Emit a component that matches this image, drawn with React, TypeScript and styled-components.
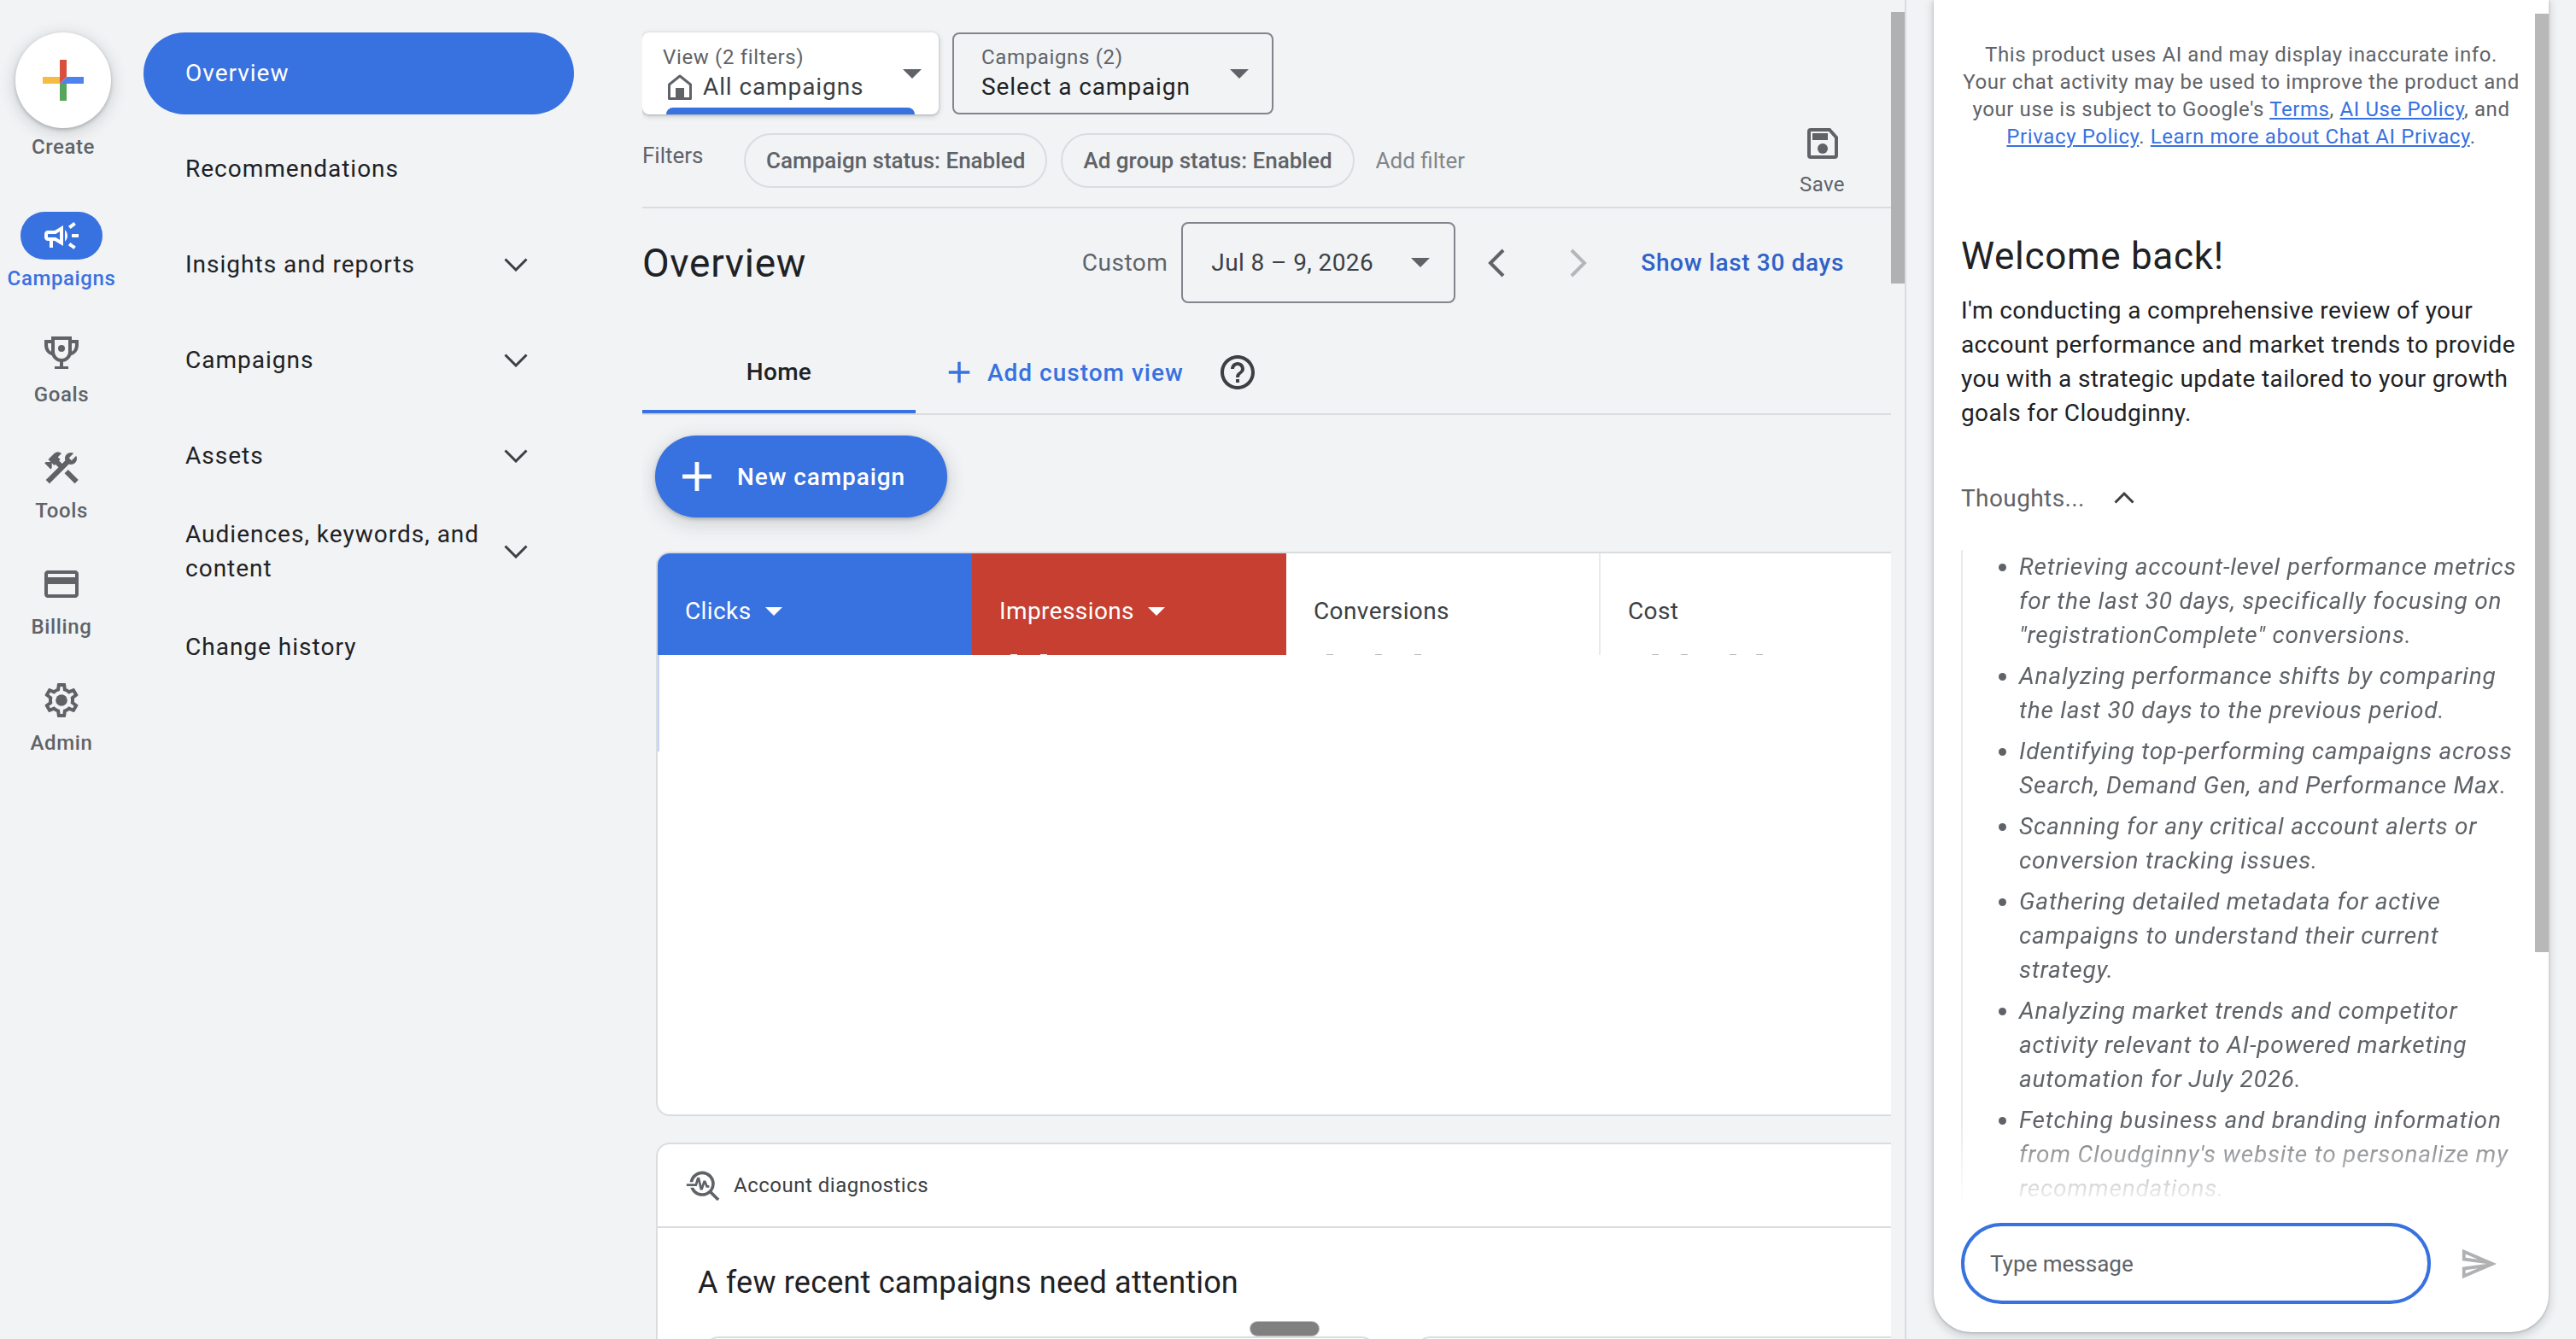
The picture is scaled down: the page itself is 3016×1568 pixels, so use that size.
import React from "react";
import styled, { createGlobalStyle } from "styled-components";
import {
  MdAdd,
  MdConstruction,
  MdOutlineCampaign,
  MdOutlineCreditCard,
  MdOutlineHelpOutline,
  MdOutlineSend,
  MdTroubleshoot,
} from "react-icons/md";

const GlobalStyle = createGlobalStyle`
  html, body {
    margin: 0;
    padding: 0;
    background: #f1f3f5;
  }
  body {
    font-family: Roboto, "Liberation Sans", sans-serif;
    color: #202124;
  }
  * {
    box-sizing: border-box;
  }
`;

const navItems = [
  { label: "Overview", active: true },
  { label: "Recommendations" },
  { label: "Insights and reports", expandable: true },
  { label: "Campaigns", expandable: true },
  { label: "Assets", expandable: true },
  { label: "Audiences, keywords, and content", expandable: true },
  { label: "Change history" },
];

const thoughts = [
  'Retrieving account-level performance metrics for the last 30 days, specifically focusing on "registrationComplete" conversions.',
  "Analyzing performance shifts by comparing the last 30 days to the previous period.",
  "Identifying top-performing campaigns across Search, Demand Gen, and Performance Max.",
  "Scanning for any critical account alerts or conversion tracking issues.",
  "Gathering detailed metadata for active campaigns to understand their current strategy.",
  "Analyzing market trends and competitor activity relevant to AI-powered marketing automation for July 2026.",
  "Fetching business and branding information from Cloudginny's website to personalize my recommendations.",
];

// tops of the clipped chart labels that peek out under the metric tiles
const clippedTicks = {
  impressions: [45, 80],
  conversions: [47, 104, 150],
  cost: [60, 94, 151, 182],
};

const GooglePlus = () => (
  <svg width="48" height="48" viewBox="0 0 48 48">
    <path fill="#f4bc41" d="M0 20h20v8H0z" />
    <path fill="#d94f3d" d="M20 0h8v20l-8 8z" />
    <path fill="#4f82ec" d="M28 20h20v8H20z" />
    <path fill="#58a65c" d="M20 28h8v20h-8z" />
  </svg>
);

const Trophy = () => (
  <svg width="40" height="40" viewBox="0 -2 40 40" fill="none" stroke="currentColor" strokeWidth="4">
    <path d="M10 2h20v16a10 10 0 0 1-20 0z" />
    <path d="M10 6H2v4c0 6 4 10 9 11M30 6h8v4c0 6-4 10-9 11" />
    <path d="M20 28v9M12 37h16" />
    <circle cx="20" cy="14" r="4" fill="currentColor" stroke="none" />
  </svg>
);

const Gear = () => (
  <svg width="48" height="48" viewBox="0 0 24 24" fill="currentColor">
    <path d="M19.43 12.98c.04-.32.07-.64.07-.98 0-.34-.03-.66-.07-.98l2.11-1.65c.19-.15.24-.42.12-.64l-2-3.46c-.09-.16-.26-.25-.44-.25-.06 0-.12.01-.17.03l-2.49 1c-.52-.4-1.08-.73-1.69-.98l-.38-2.65C14.46 2.18 14.25 2 14 2h-4c-.25 0-.46.18-.49.42l-.38 2.65c-.61.25-1.17.59-1.69.98l-2.49-1c-.06-.02-.12-.03-.18-.03-.17 0-.34.09-.43.25l-2 3.46c-.13.22-.07.49.12.64l2.11 1.65c-.04.32-.07.65-.07.98 0 .33.03.66.07.98l-2.11 1.65c-.19.15-.24.42-.12.64l2 3.46c.09.16.26.25.44.25.06 0 .12-.01.17-.03l2.49-1c.52.4 1.08.73 1.69.98l.38 2.65c.03.24.24.42.49.42h4c.25 0 .46-.18.49-.42l.38-2.65c.61-.25 1.17-.59 1.69-.98l2.49 1c.06.02.12.03.18.03.17 0 .34-.09.43-.25l2-3.46c.12-.22.07-.49-.12-.64l-2.11-1.65zm-1.98-1.71c.04.31.05.52.05.73 0 .21-.02.43-.05.73l-.14 1.13.89.7 1.08.84-.7 1.21-1.27-.51-1.04-.42-.9.68c-.43.32-.84.56-1.25.73l-1.06.43-.16 1.13-.2 1.35h-1.4l-.19-1.35-.16-1.13-1.06-.43c-.43-.18-.83-.41-1.23-.71l-.91-.7-1.06.43-1.27.51-.7-1.21 1.08-.84.89-.7-.14-1.13c-.03-.31-.05-.54-.05-.74s.02-.43.05-.73l.14-1.13-.89-.7-1.08-.84.7-1.21 1.27.51 1.04.42.9-.68c.43-.32.84-.56 1.25-.73l1.06-.43.16-1.13.2-1.35h1.39l.19 1.35.16 1.13 1.06.43c.43.18.83.41 1.23.71l.91.7 1.06-.43 1.27-.51.7 1.21-1.07.85-.89.7.14 1.13z" />
    <circle cx="12" cy="12" r="3.4" />
  </svg>
);

const HomeIcon = () => (
  <svg width="28" height="30" viewBox="0 0 28 30" fill="none" stroke="#5f6368" strokeWidth="3" strokeLinejoin="round">
    <path d="M14 2 1.500 12v16.500h25V12z" />
    <path d="M9 28V16h10v12z" fill="#5f6368" stroke="none" />
  </svg>
);

const SaveIcon = () => (
  <svg width="36" height="36" viewBox="0 0 36 36">
    <path
      fill="none"
      stroke="#5f6368"
      strokeWidth="4"
      d="M2 4a2 2 0 0 1 2-2h22l8 9v21a2 2 0 0 1-2 2H4a2 2 0 0 1-2-2z"
    />
    <path fill="#5f6368" d="M6 10V6h18v8H6z" />
    <circle cx="18" cy="24" r="6" fill="#5f6368" />
  </svg>
);

const ChevronDown = () => (
  <svg width="28" height="16" viewBox="0 0 28 16" fill="none" stroke="#3c4043" strokeWidth="3">
    <path d="M1.500 1.500 14 14 26.500 1.500" />
  </svg>
);

const ChevronUp = () => (
  <svg width="24" height="14" viewBox="0 0 24 14" fill="none" stroke="#3c4043" strokeWidth="3">
    <path d="M1.500 12.500 12 2 22.500 12.500" />
  </svg>
);

const ChevronSide = ({ dir, color }: { dir: "left" | "right"; color: string }) => (
  <svg width="20" height="34" viewBox="0 0 20 34" fill="none" stroke={color} strokeWidth="4">
    <path d={dir === "left" ? "M18 2 3 17l15 15" : "M2 2l15 15L2 32"} />
  </svg>
);

const Ticks = ({ offsets, light }: { offsets: number[]; light?: boolean }) => (
  <>
    {offsets.map((x) => (
      <Tick key={x} light={light} style={{ left: x }} />
    ))}
  </>
);

export default function App() {
  return (
    <Page>
      <GlobalStyle />
      <Rail>
        <CreateButton>
          <GooglePlus />
        </CreateButton>
        <CreateLabel>Create</CreateLabel>
        <RailList>
          <RailItem>
            <RailPill>
              <MdOutlineCampaign size={48} color="#fff" />
            </RailPill>
            <RailLabel active>Campaigns</RailLabel>
          </RailItem>
          <RailItem>
            <RailIcon>
              <Trophy />
            </RailIcon>
            <RailLabel>Goals</RailLabel>
          </RailItem>
          <RailItem>
            <RailIcon>
              <MdConstruction size={48} />
            </RailIcon>
            <RailLabel>Tools</RailLabel>
          </RailItem>
          <RailItem>
            <RailIcon>
              <MdOutlineCreditCard size={48} />
            </RailIcon>
            <RailLabel>Billing</RailLabel>
          </RailItem>
          <RailItem>
            <RailIcon>
              <Gear />
            </RailIcon>
            <RailLabel>Admin</RailLabel>
          </RailItem>
        </RailList>
      </Rail>

      <Nav>
        {navItems.map((item) => (
          <NavItem key={item.label} active={item.active}>
            <NavText>{item.label}</NavText>
            {item.expandable && <ChevronDown />}
          </NavItem>
        ))}
      </Nav>

      <Main>
        <SelectorRow>
          <ViewSelector>
            <div>
              <SelectorLabel>View (2 filters)</SelectorLabel>
              <SelectorValue>
                <HomeIcon />
                All campaigns
              </SelectorValue>
            </div>
            <Caret />
            <ViewAccent />
          </ViewSelector>
          <CampaignSelector>
            <div>
              <SelectorLabel>Campaigns (2)</SelectorLabel>
              <SelectorValue dark>Select a campaign</SelectorValue>
            </div>
            <Caret />
          </CampaignSelector>
        </SelectorRow>

        <FilterBar>
          <FilterLabel>Filters</FilterLabel>
          <Chip>Campaign status: Enabled</Chip>
          <Chip>Ad group status: Enabled</Chip>
          <AddFilter>Add filter</AddFilter>
          <SaveAction>
            <SaveIcon />
            <span>Save</span>
          </SaveAction>
        </FilterBar>

        <TitleRow>
          <PageTitle>Overview</PageTitle>
          <CustomLabel>Custom</CustomLabel>
          <DateBox>
            Jul 8 – 9, 2026
            <Caret />
          </DateBox>
          <PeriodArrows>
            <ChevronSide dir="left" color="#5f6368" />
            <ChevronSide dir="right" color="#b4b6b9" />
          </PeriodArrows>
          <ShowLast>Show last 30 days</ShowLast>
        </TitleRow>

        <Tabs>
          <HomeTab>Home</HomeTab>
          <AddView>
            <MdAdd size={42} />
            Add custom view
          </AddView>
          <HelpButton>
            <MdOutlineHelpOutline size={48} />
          </HelpButton>
        </Tabs>

        <NewCampaign>
          <MdAdd size={58} />
          New campaign
        </NewCampaign>

        <MetricCard>
          <Metrics>
            <Metric bg="#3871e0" light>
              Clicks <Caret small light />
            </Metric>
            <Metric bg="#c63f30" light>
              Impressions <Caret small light />
              <Ticks offsets={clippedTicks.impressions} light />
            </Metric>
            <Metric divided>
              Conversions
              <Ticks offsets={clippedTicks.conversions} />
            </Metric>
            <Metric>
              Cost
              <Ticks offsets={clippedTicks.cost} />
            </Metric>
          </Metrics>
          <ChartEdge />
        </MetricCard>

        <DiagnosticsCard>
          <DiagnosticsHead>
            <MdTroubleshoot size={44} color="#5f6368" />
            Account diagnostics
          </DiagnosticsHead>
          <DiagnosticsTitle>A few recent campaigns need attention</DiagnosticsTitle>
          <DiagnosticsCards>
            <SubCard />
            <SubCard />
          </DiagnosticsCards>
        </DiagnosticsCard>
        <DragHandle />
      </Main>

      <Gutter>
        <GutterThumb />
      </Gutter>

      <ChatPanel>
        <ChatScroll>
          <ChatContent>
            <Notice>
              This product uses AI and may display inaccurate info.
              <br />
              Your chat activity may be used to improve the product and
              <br />
              your use is subject to Google's <a href="#t">Terms</a>, <a href="#a">AI Use Policy</a>, and
              <br />
              <a href="#p">Privacy Policy</a>. <a href="#l">Learn more about Chat AI Privacy</a>.
            </Notice>
            <Welcome>Welcome back!</Welcome>
            <Intro>
              I'm conducting a comprehensive review of your account performance and market trends to
              provide you with a strategic update tailored to your growth goals for Cloudginny.
            </Intro>
            <ThoughtsToggle>
              Thoughts...
              <ChevronUp />
            </ThoughtsToggle>
            <Thoughts>
              <ul>
                {thoughts.map((t) => (
                  <li key={t}>{t}</li>
                ))}
              </ul>
            </Thoughts>
          </ChatContent>
          <PanelThumb />
        </ChatScroll>
        <Composer>
          <MessageBox>Type message</MessageBox>
          <MdOutlineSend size={46} color="#b0b1b3" />
        </Composer>
      </ChatPanel>
    </Page>
  );
}

const Page = styled.div`
  display: flex;
  width: 3016px;
  height: 1568px;
  overflow: hidden;
  background: #f1f3f5;
`;

const Rail = styled.aside`
  flex: none;
  width: 148px;
  padding-top: 38px;
  display: flex;
  flex-direction: column;
  align-items: center;
`;

const CreateButton = styled.div`
  flex: none;
  width: 112px;
  height: 112px;
  border-radius: 50%;
  background: #fff;
  display: flex;
  align-items: center;
  justify-content: center;
  box-shadow: 0 2px 4px rgba(60, 64, 67, 0.3), 0 4px 16px 4px rgba(60, 64, 67, 0.15);
`;

const CreateLabel = styled.div`
  margin-top: 8px;
  font-size: 24px;
  line-height: 28px;
  font-weight: 500;
  letter-spacing: 0.6px;
  color: #5f6368;
`;

const RailList = styled.div`
  margin-top: 62px;
  margin-right: 4px;
  display: flex;
  flex-direction: column;
  align-items: center;
  gap: 44px;
`;

const RailItem = styled.div`
  display: flex;
  flex-direction: column;
  align-items: center;
  gap: 8px;
`;

const RailPill = styled.div`
  width: 96px;
  height: 56px;
  border-radius: 28px;
  background: #3871e0;
  display: flex;
  align-items: center;
  justify-content: center;
`;

const RailIcon = styled.div`
  width: 96px;
  height: 56px;
  display: flex;
  align-items: center;
  justify-content: center;
  color: #5f6368;
`;

const RailLabel = styled.div<{ active?: boolean }>`
  font-size: 24px;
  line-height: 28px;
  font-weight: 500;
  letter-spacing: 0.6px;
  color: ${(props) => (props.active ? "#3871e0" : "#5f6368")};
`;

const Nav = styled.nav`
  flex: none;
  width: 504px;
  margin-left: 20px;
  padding-top: 38px;
  display: flex;
  flex-direction: column;
  gap: 16px;
`;

const NavItem = styled.div<{ active?: boolean }>`
  height: 96px;
  padding: 0 54px 0 49px;
  border-radius: 48px;
  display: flex;
  align-items: center;
  justify-content: space-between;
  gap: 16px;
  background: ${(props) => (props.active ? "#3871e0" : "transparent")};
  color: ${(props) => (props.active ? "#fff" : "#202124")};

  svg {
    flex: none;
  }
`;

const NavText = styled.span`
  font-family: Roboto, sans-serif;
  font-size: 28px;
  line-height: 40px;
  font-weight: 400;
  letter-spacing: 1px;
`;

const Main = styled.main`
  position: relative;
  flex: none;
  width: 1462px;
  height: 1568px;
  margin-left: 80px;
  padding-top: 38px;
  overflow: hidden;
`;

const SelectorRow = styled.div`
  display: flex;
  gap: 16px;
`;

const ViewSelector = styled.div`
  position: relative;
  width: 347px;
  height: 96px;
  padding: 0 20px 0 24px;
  border-radius: 8px;
  background: #fff;
  display: flex;
  align-items: center;
  justify-content: space-between;
  box-shadow: 0 1px 3px rgba(60, 64, 67, 0.3), 0 2px 6px 1px rgba(60, 64, 67, 0.15);
`;

const ViewAccent = styled.div`
  position: absolute;
  left: 28px;
  right: 28px;
  bottom: 0;
  height: 8px;
  border-radius: 8px 8px 0 0;
  background: #3871e0;
`;

const CampaignSelector = styled.div`
  width: 376px;
  height: 96px;
  padding: 0 27px 0 32px;
  border: 2px solid #80868b;
  border-radius: 8px;
  display: flex;
  align-items: center;
  justify-content: space-between;
`;

const SelectorLabel = styled.div`
  font-size: 24px;
  line-height: 32px;
  letter-spacing: 0.65px;
  color: #5f6368;
`;

const SelectorValue = styled.div<{ dark?: boolean }>`
  display: flex;
  align-items: center;
  gap: 13px;
  margin-left: ${(props) => (props.dark ? "0" : "6px")};
  font-size: 28px;
  line-height: 38px;
  letter-spacing: 0.9px;
  color: ${(props) => (props.dark ? "#202124" : "#3c4043")};
`;

const Caret = styled.span<{ small?: boolean; light?: boolean }>`
  display: inline-block;
  flex: none;
  width: 0;
  height: 0;
  border-left: ${(props) => (props.small ? "10px" : "11px")} solid transparent;
  border-right: ${(props) => (props.small ? "10px" : "11px")} solid transparent;
  border-top: ${(props) => (props.small ? "10px" : "11px")} solid ${(props) => (props.light ? "#fff" : "#5f6368")};
`;

const FilterBar = styled.div`
  position: relative;
  height: 110px;
  padding-top: 22px;
  display: flex;
  align-items: flex-start;
  border-bottom: 2px solid #dadce0;
`;

const FilterLabel = styled.div`
  width: 119px;
  padding-top: 10px;
  font-size: 26px;
  line-height: 32px;
  color: #5f6368;
`;

const Chip = styled.div`
  height: 64px;
  margin-right: 16px;
  padding: 0 24px;
  border: 2px solid #dadce0;
  border-radius: 32px;
  display: flex;
  align-items: center;
  font-size: 26px;
  font-weight: 500;
  color: #5f6368;
`;

const AddFilter = styled.div`
  height: 64px;
  margin-left: 9px;
  display: flex;
  align-items: center;
  font-size: 26px;
  color: #80868b;
`;

const SaveAction = styled.div`
  position: absolute;
  right: 54px;
  top: 16px;
  display: flex;
  flex-direction: column;
  align-items: center;
  gap: 16px;
  font-size: 24px;
  line-height: 28px;
  color: #5f6368;
  letter-spacing: 0.4px;
`;

const TitleRow = styled.div`
  margin-top: 16px;
  display: flex;
  align-items: center;
  height: 95px;
`;

const PageTitle = styled.h1`
  margin: 0 auto 0 0;
  font-size: 46px;
  line-height: 56px;
  font-weight: 400;
  letter-spacing: 0.7px;
  color: #202124;
`;

const CustomLabel = styled.span`
  margin-right: 16px;
  font-size: 28px;
  letter-spacing: 0.5px;
  color: #5f6368;
`;

const DateBox = styled.div`
  width: 321px;
  height: 95px;
  padding: 0 28px 0 33px;
  border: 2px solid #80868b;
  border-radius: 8px;
  display: flex;
  align-items: center;
  justify-content: space-between;
  font-size: 28px;
  letter-spacing: 0.4px;
  color: #3c4043;
`;

const PeriodArrows = styled.div`
  margin-left: 38px;
  display: flex;
  gap: 76px;
`;

const ShowLast = styled.a`
  margin-left: 63px;
  margin-right: 55px;
  font-size: 28px;
  font-weight: 500;
  letter-spacing: 0.65px;
  color: #2f62c7;
`;

const Tabs = styled.div`
  margin-top: 33px;
  height: 98px;
  display: flex;
  align-items: center;
  border-bottom: 2px solid #dadce0;
`;

const HomeTab = styled.div`
  width: 320px;
  height: 96px;
  padding-top: 2px;
  display: flex;
  align-items: center;
  justify-content: center;
  border-bottom: 4px solid #3871e0;
  font-size: 28px;
  font-weight: 500;
  letter-spacing: 0.3px;
  color: #202124;
`;

const AddView = styled.div`
  margin-left: 30px;
  display: flex;
  align-items: center;
  gap: 12px;
  font-size: 28px;
  font-weight: 500;
  letter-spacing: 1px;
  color: #3871e0;
`;

const HelpButton = styled.div`
  margin-left: 39px;
  display: flex;
  color: #3c4043;
`;

const NewCampaign = styled.div`
  width: 342px;
  height: 96px;
  margin: 24px 0 0 15px;
  padding-left: 20px;
  border-radius: 48px;
  display: flex;
  align-items: center;
  gap: 18px;
  background: #3871e0;
  color: #fff;
  font-size: 28px;
  font-weight: 500;
  letter-spacing: 0.9px;
  box-shadow: 0 2px 4px rgba(60, 64, 67, 0.3), 0 6px 20px 4px rgba(60, 64, 67, 0.15);
`;

const MetricCard = styled.section`
  height: 661px;
  margin: 40px -40px 0 16px;
  border: 2px solid #dadce0;
  border-radius: 16px;
  background: #fff;
  overflow: hidden;
`;

const Metrics = styled.div`
  display: flex;
  height: 121px;
  margin-top: -2px;
`;

const Metric = styled.div<{ bg?: string; light?: boolean; divided?: boolean }>`
  position: relative;
  flex: none;
  width: 368px;
  padding: 18px 0 0 32px;
  display: flex;
  align-items: center;
  gap: 16px;
  font-size: 28px;
  letter-spacing: 0.4px;
  background: ${(props) => props.bg || "#fff"};
  color: ${(props) => (props.light ? "#fff" : "#3c4043")};
  border-right: ${(props) => (props.divided ? "2px solid #e8eaed" : "none")};
`;

const Tick = styled.span<{ light?: boolean }>`
  position: absolute;
  bottom: 0;
  width: 8px;
  height: 1px;
  background: ${(props) => (props.light ? "#f6e4e1" : "#bdbdbd")};
`;

const ChartEdge = styled.div`
  width: 2px;
  height: 113px;
  background: #c3d4f6;
`;

const DiagnosticsCard = styled.section`
  height: 300px;
  margin: 31px -40px 0 16px;
  border: 2px solid #dadce0;
  border-radius: 16px 16px 0 0;
  background: #fff;
`;

const DiagnosticsHead = styled.div`
  height: 98px;
  padding: 0 0 0 32px;
  border-bottom: 2px solid #dadce0;
  display: flex;
  align-items: center;
  gap: 13px;
  font-size: 24px;
  letter-spacing: 0.5px;
  color: #3c4043;
`;

const DiagnosticsTitle = styled.h2`
  margin: 40px 0 0 47px;
  font-size: 36px;
  line-height: 48px;
  font-weight: 400;
  letter-spacing: 0.2px;
  color: #202124;
`;

const DiagnosticsCards = styled.div`
  margin: 39px 0 0 55px;
  display: flex;
  gap: 48px;
`;

const SubCard = styled.div`
  flex: none;
  width: 785px;
  height: 40px;
  border: 2px solid #dadce0;
  border-radius: 16px 16px 0 0;
`;

const DragHandle = styled.div`
  position: absolute;
  left: 712px;
  bottom: 4px;
  width: 80px;
  height: 16px;
  border-radius: 8px;
  background: #808080;
  box-shadow: 0 0 0 1px #bbb;
`;

const Gutter = styled.div`
  flex: none;
  width: 18px;
  height: 1568px;
  padding-top: 14px;
  border-right: 2px solid #dadce0;
`;

const GutterThumb = styled.div`
  width: 16px;
  height: 318px;
  background: #b0b1b3;
`;

const ChatPanel = styled.section`
  flex: none;
  width: 720px;
  height: 1560px;
  margin-left: 32px;
  border-radius: 0 0 44px 44px;
  background: #fff;
  display: flex;
  flex-direction: column;
  box-shadow: 0 1px 3px rgba(60, 64, 67, 0.3), 0 4px 8px 3px rgba(60, 64, 67, 0.15);
`;

const ChatScroll = styled.div`
  display: flex;
  height: 1412px;
  overflow: hidden;
`;

const ChatContent = styled.div`
  flex: none;
  width: 704px;
  padding: 48px 14px 0 32px;
`;

const PanelThumb = styled.div`
  flex: none;
  width: 16px;
  height: 1099px;
  margin-top: 16px;
  background: #b8b8b8;
`;

const Notice = styled.p`
  margin: 0;
  padding-right: 2px;
  font-size: 24px;
  line-height: 32px;
  text-align: center;
  color: #5f6368;
  letter-spacing: 0.6px;

  a {
    color: #3871e0;
    text-decoration: underline;
  }
`;

const Welcome = styled.h2`
  margin: 96px 0 0;
  font-size: 44px;
  line-height: 56px;
  font-weight: 400;
  letter-spacing: 0.7px;
  color: #202124;
`;

const Intro = styled.p`
  margin: 16px 0 0;
  font-size: 28px;
  line-height: 40px;
  color: #202124;
  letter-spacing: 0.36px;
`;

const ThoughtsToggle = styled.div`
  margin-top: 55px;
  height: 48px;
  display: flex;
  align-items: center;
  gap: 34px;
  font-size: 28px;
  letter-spacing: 0.4px;
  color: #5f6368;
`;

const Thoughts = styled.div`
  margin-top: 37px;
  height: 768px;
  overflow: hidden;
  border-left: 2px solid #e8eaed;
  font-size: 28px;
  line-height: 40px;
  font-style: italic;
  color: #5f6368;
  mask-image: linear-gradient(to bottom, #000 calc(100% - 96px), transparent);

  ul {
    margin: 0;
    padding: 0 0 0 66px;
  }

  li {
    margin-bottom: 8px;
    letter-spacing: 0.8px;
  }
`;

const Composer = styled.div`
  margin-top: 20px;
  padding: 0 0 0 32px;
  display: flex;
  align-items: center;
  gap: 33px;
`;

const MessageBox = styled.div`
  width: 550px;
  height: 95px;
  padding-left: 30px;
  border: 4px solid #3871e0;
  border-radius: 48px;
  display: flex;
  align-items: center;
  font-size: 26px;
  color: #5f6368;
`;
